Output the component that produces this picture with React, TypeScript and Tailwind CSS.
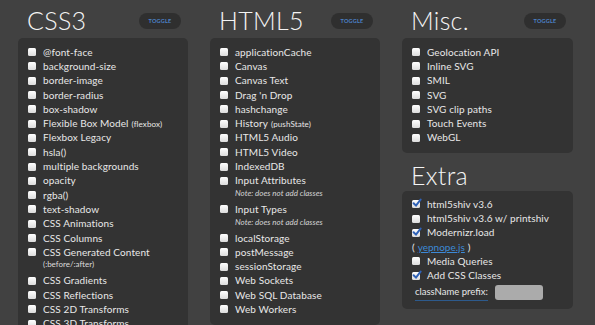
import React from 'react'

type Item = {
  label: string
  small?: string
  note?: string
  sub?: string
  checked?: boolean
}

const css3: Item[] = [
  { label: '@font-face' },
  { label: 'background-size' },
  { label: 'border-image' },
  { label: 'border-radius' },
  { label: 'box-shadow' },
  { label: 'Flexible Box Model', small: '(flexbox)' },
  { label: 'Flexbox Legacy' },
  { label: 'hsla()' },
  { label: 'multiple backgrounds' },
  { label: 'opacity' },
  { label: 'rgba()' },
  { label: 'text-shadow' },
  { label: 'CSS Animations' },
  { label: 'CSS Columns' },
  { label: 'CSS Generated Content', sub: '(:before/:after)' },
  { label: 'CSS Gradients' },
  { label: 'CSS Reflections' },
  { label: 'CSS 2D Transforms' },
  { label: 'CSS 3D Transforms' },
]

const html5: Item[] = [
  { label: 'applicationCache' },
  { label: 'Canvas' },
  { label: 'Canvas Text' },
  { label: "Drag 'n Drop" },
  { label: 'hashchange' },
  { label: 'History', small: '(pushState)' },
  { label: 'HTML5 Audio' },
  { label: 'HTML5 Video' },
  { label: 'IndexedDB' },
  { label: 'Input Attributes', note: 'Note: does not add classes' },
  { label: 'Input Types', note: 'Note: does not add classes' },
  { label: 'localStorage' },
  { label: 'postMessage' },
  { label: 'sessionStorage' },
  { label: 'Web Sockets' },
  { label: 'Web SQL Database' },
  { label: 'Web Workers' },
]

const misc: Item[] = [
  { label: 'Geolocation API' },
  { label: 'Inline SVG' },
  { label: 'SMIL' },
  { label: 'SVG' },
  { label: 'SVG clip paths' },
  { label: 'Touch Events' },
  { label: 'WebGL' },
]

function Box({ checked }: { checked?: boolean }) {
  return (
    <span className="relative mr-[7px] inline-block h-[8px] w-[8px] shrink-0 rounded-[1.5px] bg-gradient-to-b from-[#ffffff] to-[#dcdcdc]">
      {checked ? (
        <svg viewBox="0 0 10 10" className="absolute left-[0px] top-[-2px] h-[10px] w-[10px]">
          <path d="M1.6 5.2 L4 7.6 L8.6 1.6" fill="none" stroke="#2f62b8" strokeWidth="2" strokeLinecap="round" />
        </svg>
      ) : null}
    </span>
  )
}

function Row({ item }: { item: Item }) {
  return (
    <li className={item.note || item.sub ? 'h-[28.6px]' : 'h-[14.3px]'}>
      <div className="flex h-[14.3px] items-center">
        <Box checked={item.checked} />
        <span className="text-[10px] tracking-[0.1px] text-[#e8e8e8]">
          {item.label}
          {item.small ? <span className="ml-[3px] text-[8px]">{item.small}</span> : null}
        </span>
      </div>
      {item.sub ? <div className="pl-[15px] text-[8px] leading-[10px] text-[#dcdcdc]">{item.sub}</div> : null}
      {item.note ? <div className="pl-[15px] text-[8px] italic leading-[10px] text-[#d4d4d4]">{item.note}</div> : null}
    </li>
  )
}

function Heading({ title, toggle = true }: { title: string; toggle?: boolean }) {
  return (
    <div className="flex h-[38px] items-center justify-between pl-[9px] pr-[7px] pt-[2px]">
      <h2 className="text-[25px] font-light leading-none tracking-[0.3px] text-[#f4f4f4]">{title}</h2>
      {toggle ? (
        <button className="mt-[2px] h-[16px] w-[42px] rounded-full bg-[#2f2f2f] text-[5.5px] font-bold tracking-[0.2px] text-[#4c82c8]">
          TOGGLE
        </button>
      ) : null}
    </div>
  )
}

function Panel({ items, className = '' }: { items: Item[]; className?: string }) {
  return (
    <ul className={`rounded-[5px] bg-[#333333] px-[10px] pt-[7px] pb-[8px] ${className}`}>
      {items.map((item) => (
        <Row key={item.label} item={item} />
      ))}
    </ul>
  )
}

export default function App() {
  return (
    <div className="h-[325px] w-[595px] overflow-hidden bg-[#414141] font-['Lato','Open_Sans',sans-serif]">
      <div className="flex gap-[22px] pl-[18px]">
        <div className="w-[170px]">
          <Heading title="CSS3" />
          <Panel items={css3} className="pb-[20px]" />
        </div>
        <div className="w-[170px]">
          <Heading title="HTML5" />
          <Panel items={html5} />
        </div>
        <div className="w-[171px]">
          <Heading title="Misc." />
          <Panel items={misc} />
          <div className="flex h-[38px] items-end pb-[3px] pl-[9px]">
            <h2 className="text-[25px] font-light leading-none tracking-[0.3px] text-[#f4f4f4]">Extra</h2>
          </div>
          <div className="rounded-[5px] bg-[#333333] px-[10px] pt-[6px] pb-[8px]">
            <ul>
              <Row item={{ label: 'html5shiv v3.6', checked: true }} />
              <Row item={{ label: 'html5shiv v3.6 w/ printshiv' }} />
              <Row item={{ label: 'Modernizr.load', checked: true }} />
              <li className="flex h-[14.3px] items-center text-[10px] text-[#e8e8e8]">
                (<span className="mx-[3px] text-[#3d8ad6] underline">yepnope.js</span>)
              </li>
              <Row item={{ label: 'Media Queries' }} />
              <Row item={{ label: 'Add CSS Classes', checked: true }} />
            </ul>
            <div className="mt-[2px] flex items-center gap-[7px] pl-[3px]">
              <span className="border-b border-[#2d5a8c] pb-[1px] text-[9.5px] text-[#e8e8e8]">className prefix:</span>
              <span className="h-[15px] w-[48px] rounded-[3px] bg-[#ababab]" />
            </div>
          </div>
        </div>
      </div>
    </div>
  )
}
